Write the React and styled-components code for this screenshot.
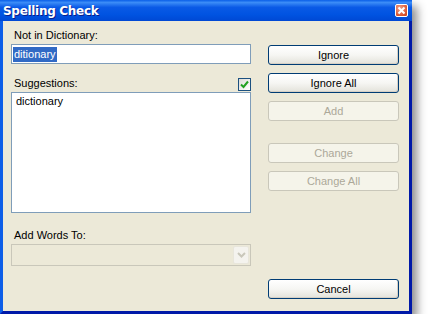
import React from "react";
import styled, { createGlobalStyle } from "styled-components";

const GlobalStyle = createGlobalStyle`
  *, *::before, *::after {
    box-sizing: border-box;
  }
  body {
    margin: 0;
    background: #ffffff;
    font-family: "Liberation Sans", Arial, sans-serif;
  }
`;

function App() {
  return (
    <>
      <GlobalStyle />
      <Window>
        <TitleBar>
          <Title>Spelling Check</Title>
          <CloseButton aria-label="Close">
            <svg width="9" height="9" viewBox="0 0 9 9">
              <path d="M1.5 1.5 L7.5 7.5 M7.5 1.5 L1.5 7.5" stroke="#fff" strokeWidth="2" />
            </svg>
          </CloseButton>
        </TitleBar>
        <Client>
          <LeftColumn>
            <Label>Not in Dictionary:</Label>
            <TextInput>
              <Selected>ditionary</Selected>
            </TextInput>
            <LabelRow>
              <Label>Suggestions:</Label>
              <CheckBox>
                <svg width="9" height="9" viewBox="0 0 9 9">
                  <path d="M1 4.5 L3.5 7 L8 1.5" stroke="#21a121" strokeWidth="2" fill="none" />
                </svg>
              </CheckBox>
            </LabelRow>
            <ListBox>
              <ListItem>dictionary</ListItem>
            </ListBox>
            <Label $top={16}>Add Words To:</Label>
            <Combo>
              <ComboArrow>
                <svg width="9" height="6" viewBox="0 0 9 6">
                  <path d="M1 1 L4.5 4.5 L8 1" stroke="#c9c7ba" strokeWidth="2" fill="none" />
                </svg>
              </ComboArrow>
            </Combo>
          </LeftColumn>
          <ButtonColumn>
            <Button>Ignore</Button>
            <Button>Ignore All</Button>
            <Button disabled>Add</Button>
            <Button disabled $top={14}>Change</Button>
            <Button disabled>Change All</Button>
            <Button $push>Cancel</Button>
          </ButtonColumn>
        </Client>
      </Window>
    </>
  );
}

export default App;

const Window = styled.div`
  width: 412px;
  height: 314px;
  display: flex;
  flex-direction: column;
  box-shadow: 5px 6px 9px rgba(0, 0, 0, 0.45);
`;
//
const TitleBar = styled.div`
  height: 21px;
  flex: none;
  display: flex;
  align-items: center;
  justify-content: space-between;
  padding: 0 4px 0 3px;
  background: linear-gradient(
    to bottom,
    #0a5fe8 0%,
    #3b8cf7 12%,
    #0a5ae6 35%,
    #0053e1 70%,
    #0048d4 100%
  );
`;
//
const Title = styled.span`
  color: #fff;
  font-family: "DejaVu Sans", Verdana, sans-serif;
  font-weight: bold;
  font-size: 12px;
  letter-spacing: -0.3px;
  text-shadow: 1px 1px 0 #0a1e8c;
`;
//
const CloseButton = styled.div`
  width: 13px;
  height: 13px;
  border: 1px solid #fff;
  border-radius: 2px;
  display: flex;
  align-items: center;
  justify-content: center;
  background: radial-gradient(circle at 35% 30%, #f0a08a, #d9542f 70%, #c23e1c);
`;
//
const Client = styled.div`
  flex: 1;
  display: grid;
  grid-template-columns: 240px 131px;
  column-gap: 17px;
  padding: 8px 0 12px 8px;
  background: #ece9d8;
  border: 3px solid #0831d9;
  border-top: none;
  border-left-color: #0d5ee8;
  border-right-color: #0019a8;
  border-bottom-color: #0019a8;
  font-size: 11px;
  color: #000;
`;
//
const LeftColumn = styled.div`
  display: flex;
  flex-direction: column;
`;
//
const Label = styled.div`
  height: 13px;
  line-height: 13px;
  padding-left: 3px;
  margin-top: ${(p) => p.$top || 0}px;
  margin-bottom: 2px;
`;
//
const TextInput = styled.div`
  height: 20px;
  border: 1px solid #7f9db9;
  background: #fff;
  display: flex;
  align-items: center;
  padding-left: 1px;
`;
//
const Selected = styled.span`
  background: #316ac5;
  color: #fff;
  line-height: 15px;
  padding: 0 1px;
`;
//
const LabelRow = styled.div`
  margin-top: 13px;
  height: 15px;
  display: flex;
  justify-content: space-between;
  align-items: flex-start;
  & > div:first-child {
    margin-bottom: 0;
  }
`;
//
const CheckBox = styled.div`
  width: 13px;
  height: 13px;
  margin-top: 1px;
  border: 1px solid #1c5180;
  background: linear-gradient(135deg, #dcdcd7, #ffffff);
  display: flex;
  align-items: center;
  justify-content: center;
`;
//
const ListBox = styled.div`
  height: 121px;
  border: 1px solid #7f9db9;
  background: #fff;
  padding: 2px 4px;
`;
//
const ListItem = styled.div`
  line-height: 13px;
`;
//
const Combo = styled.div`
  height: 22px;
  border: 1px solid #c9c7ba;
  display: flex;
  justify-content: flex-end;
  padding: 1px;
`;
//
const ComboArrow = styled.div`
  width: 16px;
  height: 18px;
  border: 1px solid #e8e6db;
  border-radius: 2px;
  background: #f4f3ee;
  display: flex;
  align-items: center;
  justify-content: center;
`;
//
const ButtonColumn = styled.div`
  display: flex;
  flex-direction: column;
  gap: 8px;
  padding-top: 16px;
`;
//
const Button = styled.button`
  height: 20px;
  flex: none;
  margin-top: ${(p) => (p.$push ? "auto" : `${p.$top || 0}px`)};
  font-family: "Liberation Sans", Arial, sans-serif;
  font-size: 11px;
  font-weight: normal;
  color: #000;
  padding: 0;
  border: 1px solid #003c74;
  border-radius: 3px;
  background: linear-gradient(to bottom, #ffffff 0%, #f6f6f3 50%, #e3e2da 100%);
  box-shadow: inset -1px -1px 0 #d6d0c5;

  &:disabled {
    color: #aca899;
    border-color: #c9c7ba;
    background: #f5f4ea;
    box-shadow: none;
  }
`;
